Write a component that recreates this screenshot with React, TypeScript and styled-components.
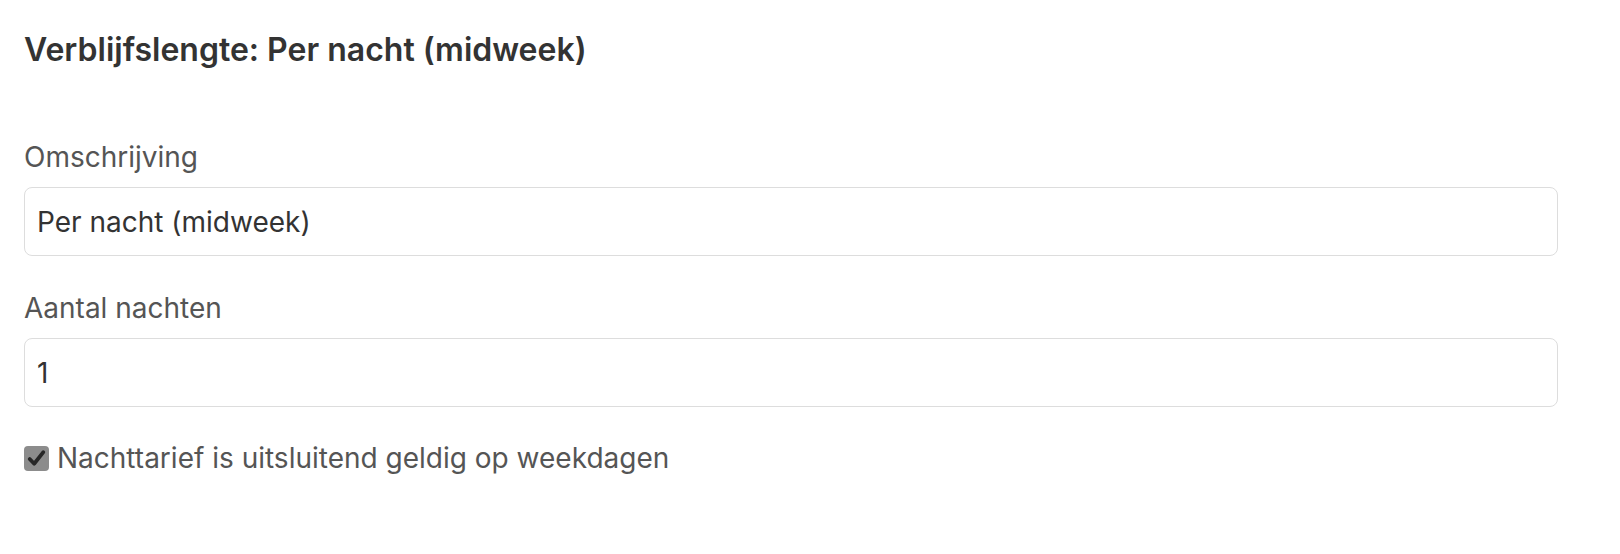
import React from 'react'
import styled, { createGlobalStyle } from 'styled-components'

const GlobalStyle = createGlobalStyle`
  html, body {
    margin: 0;
    padding: 0;
    background: #ffffff;
  }
  body {
    font-family: Inter, "Noto Sans", "Liberation Sans", sans-serif;
    color: #333333;
  }
`

const Page = styled.div`
  padding: 31px 24px 0 24px;
`

const Form = styled.form`
  width: 1534px;
  display: flex;
  flex-direction: column;
`

const Title = styled.h2`
  margin: 0 0 69px 0;
  font-size: 32px;
  line-height: 38px;
  font-weight: 600;
  color: #333333;
`

const Field = styled.div`
  display: flex;
  flex-direction: column;
  margin-bottom: 33px;
`

const Label = styled.label`
  font-size: 28px;
  line-height: 38px;
  color: #555555;
  margin-bottom: 11px;
`

const Input = styled.input`
  box-sizing: border-box;
  width: 100%;
  height: 69px;
  padding: 0 12px;
  border: 1.5px solid #dddddd;
  border-radius: 8px;
  font-family: inherit;
  font-size: 28px;
  color: #333333;
  background: #ffffff;
  outline: none;
`

const CheckRow = styled.label`
  display: flex;
  align-items: center;
  gap: 8px;
  margin-top: -1px;
  font-size: 28px;
  line-height: 38px;
  color: #555555;
`

const Box = styled.span`
  width: 25px;
  height: 25px;
  border-radius: 4px;
  background: #8c8c8c;
  display: flex;
  align-items: center;
  justify-content: center;
  flex-shrink: 0;
`

const Check = () => (
  <svg width="21" height="21" viewBox="0 0 20 20" fill="none">
    <path
      d="M3.5 10.5 L7.8 15 L16.5 4"
      stroke="#262626"
      strokeWidth="3.6"
      strokeLinecap="round"
      strokeLinejoin="round"
    />
  </svg>
)

export default function App() {
  return (
    <Page>
      <GlobalStyle />
      <Form onSubmit={(e) => e.preventDefault()}>
        <Title>Verblijfslengte: Per nacht (midweek)</Title>
        <Field>
          <Label htmlFor="omschrijving">Omschrijving</Label>
          <Input id="omschrijving" defaultValue="Per nacht (midweek)" />
        </Field>
        <Field>
          <Label htmlFor="nachten">Aantal nachten</Label>
          <Input id="nachten" defaultValue="1" />
        </Field>
        <CheckRow>
          <Box>
            <Check />
          </Box>
          Nachttarief is uitsluitend geldig op weekdagen
        </CheckRow>
      </Form>
    </Page>
  )
}
